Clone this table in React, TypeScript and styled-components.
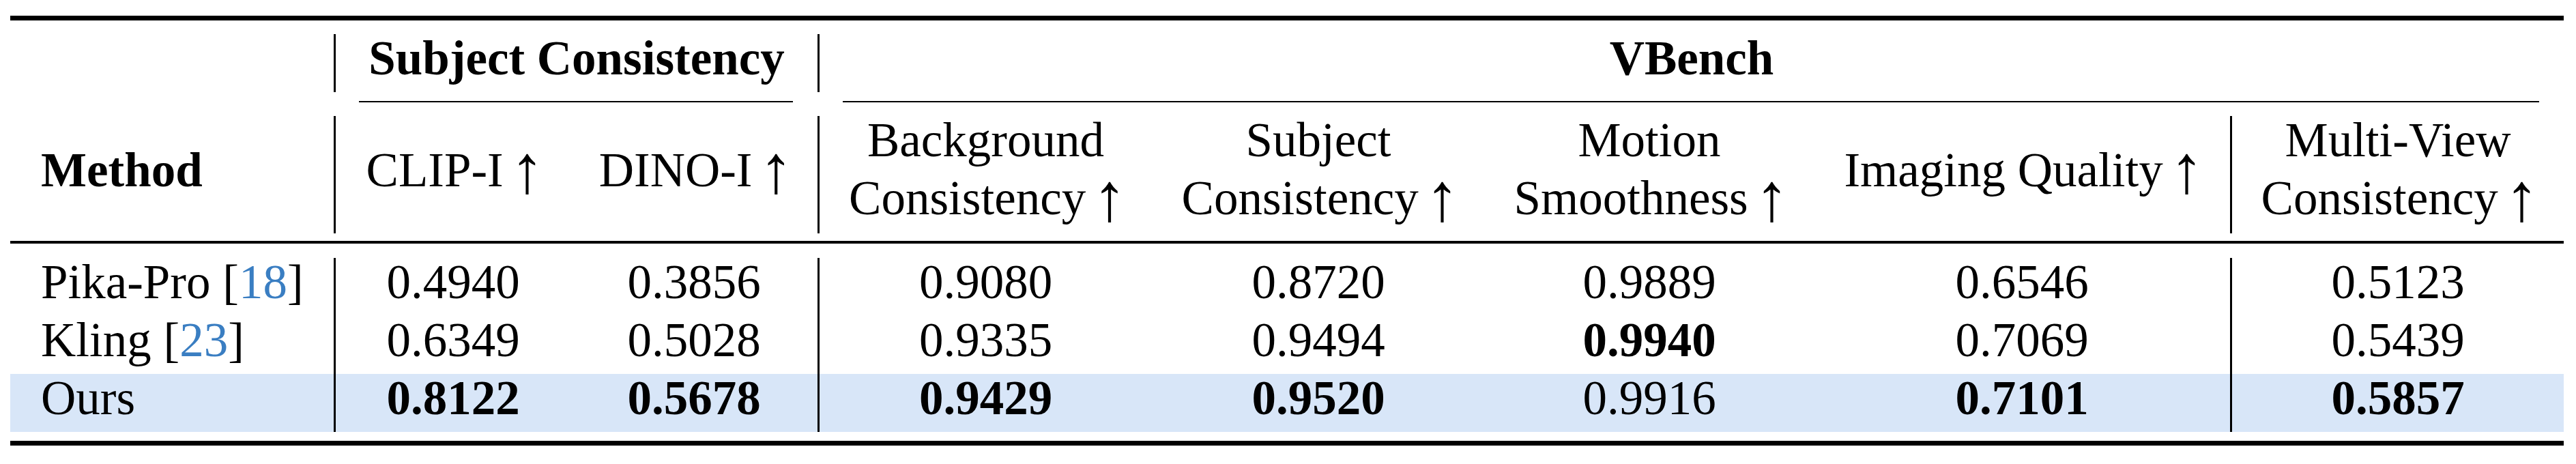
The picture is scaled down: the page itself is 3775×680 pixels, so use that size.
import React from "react";
import styled, { createGlobalStyle } from "styled-components";

const GlobalStyle = createGlobalStyle`
  html, body {
    margin: 0;
    padding: 0;
    background: #ffffff;
  }
  body {
    font-family: "Liberation Serif", "Times New Roman", serif;
    color: #000000;
  }
`;

const COLS = "474px 347px 362px 490px 488px 482px 610px 489px";
const DIVIDERS = [1, 3, 7];

const Page = styled.div`
  width: 3775px;
  height: 680px;
  box-sizing: border-box;
  padding: 23px 18px 0 15px;
  font-family: "Liberation Serif", "Times New Roman", serif;
  font-size: 71px;
  color: #000000;
  background: #ffffff;
`;

const Table = styled.div`
  display: flex;
  flex-direction: column;
  width: 3742px;
`;

const Rule = styled.div<{ $weight: number; $above?: number; $below?: number }>`
  height: ${(p) => p.$weight}px;
  background: #000000;
  margin-top: ${(p) => p.$above ?? 0}px;
  margin-bottom: ${(p) => p.$below ?? 0}px;
`;

const Row = styled.div<{ $height: number; $highlight?: boolean; $above?: number }>`
  display: grid;
  grid-template-columns: ${COLS};
  height: ${(p) => p.$height}px;
  margin-top: ${(p) => p.$above ?? 0}px;
  background: ${(p) => (p.$highlight ? "#d8e6f8" : "transparent")};
`;

const Cell = styled.div<{
  $span?: number;
  $divider?: boolean;
  $left?: boolean;
  $middle?: boolean;
}>`
  grid-column: span ${(p) => p.$span ?? 1};
  box-sizing: border-box;
  border-left: ${(p) => (p.$divider ? "3px solid #000000" : "none")};
  display: flex;
  flex-direction: column;
  justify-content: ${(p) => (p.$middle ? "center" : "flex-start")};
  align-items: ${(p) => (p.$left ? "flex-start" : "center")};
  padding-left: ${(p) => (p.$left ? "45px" : "0")};
`;

const CmidCell = styled.div<{ $span?: number }>`
  grid-column: span ${(p) => p.$span ?? 1};
  padding: 13px 36px 0 37px;
`;

const CmidRule = styled.div`
  height: 2px;
  background: #000000;
`;

const Line = styled.span<{ $bold?: boolean }>`
  display: block;
  height: 85px;
  line-height: 71px;
  white-space: nowrap;
  font-weight: ${(p) => (p.$bold ? 700 : 400)};
`;

const Arrow = styled.span`
  font-family: "Liberation Serif", "Times New Roman", serif;
  font-weight: 400;
  font-size: 100px;
  line-height: 0;
  vertical-align: -9px;
  margin: 0 -6px 0 -8px;
`;

const Cite = styled.span`
  color: #3a7ec2;
`;

type Metric = { lines: string[] };

const METRICS: Metric[] = [
  { lines: ["CLIP-I"] },
  { lines: ["DINO-I"] },
  { lines: ["Background", "Consistency"] },
  { lines: ["Subject", "Consistency"] },
  { lines: ["Motion", "Smoothness"] },
  { lines: ["Imaging Quality"] },
  { lines: ["Multi-View", "Consistency"] },
];

type Value = { v: string; best?: boolean };
type DataRow = { name: string; cite?: string; highlight?: boolean; values: Value[] };

const ROWS: DataRow[] = [
  {
    name: "Pika-Pro",
    cite: "18",
    values: [
      { v: "0.4940" },
      { v: "0.3856" },
      { v: "0.9080" },
      { v: "0.8720" },
      { v: "0.9889" },
      { v: "0.6546" },
      { v: "0.5123" },
    ],
  },
  {
    name: "Kling",
    cite: "23",
    values: [
      { v: "0.6349" },
      { v: "0.5028" },
      { v: "0.9335" },
      { v: "0.9494" },
      { v: "0.9940", best: true },
      { v: "0.7069" },
      { v: "0.5439" },
    ],
  },
  {
    name: "Ours",
    highlight: true,
    values: [
      { v: "0.8122", best: true },
      { v: "0.5678", best: true },
      { v: "0.9429", best: true },
      { v: "0.9520", best: true },
      { v: "0.9916" },
      { v: "0.7101", best: true },
      { v: "0.5857", best: true },
    ],
  },
];

export default function App() {
  return (
    <>
      <GlobalStyle />
      <Page>
        <Table>
          <Rule $weight={7} />

          <Row $height={85} $above={20}>
            <Cell />
            <Cell $span={2} $divider>
              <Line $bold>Subject Consistency</Line>
            </Cell>
            <Cell $span={5} $divider>
              <Line $bold>VBench</Line>
            </Cell>
          </Row>

          <Row $height={35}>
            <CmidCell />
            <CmidCell $span={2}>
              <CmidRule />
            </CmidCell>
            <CmidCell $span={5}>
              <CmidRule />
            </CmidCell>
          </Row>

          <Row $height={172}>
            <Cell $left $middle>
              <Line $bold>Method</Line>
            </Cell>
            {METRICS.map((m, i) => (
              <Cell key={i} $divider={DIVIDERS.includes(i + 1)} $middle={m.lines.length === 1}>
                {m.lines.map((text, j) => (
                  <Line key={j}>
                    {text}
                    {j === m.lines.length - 1 ? (
                      <>
                        {" "}
                        <Arrow>↑</Arrow>
                      </>
                    ) : null}
                  </Line>
                ))}
              </Cell>
            ))}
          </Row>

          <Rule $weight={4} $above={11} $below={21} />

          {ROWS.map((r) => (
            <Row key={r.name} $height={85} $highlight={r.highlight}>
              <Cell $left>
                <Line>
                  {r.name}
                  {r.cite ? (
                    <>
                      {" "}[<Cite>{r.cite}</Cite>]
                    </>
                  ) : null}
                </Line>
              </Cell>
              {r.values.map((val, i) => (
                <Cell key={i} $divider={DIVIDERS.includes(i + 1)}>
                  <Line $bold={val.best}>{val.v}</Line>
                </Cell>
              ))}
            </Row>
          ))}

          <Rule $weight={7} $above={13} />
        </Table>
      </Page>
    </>
  );
}
